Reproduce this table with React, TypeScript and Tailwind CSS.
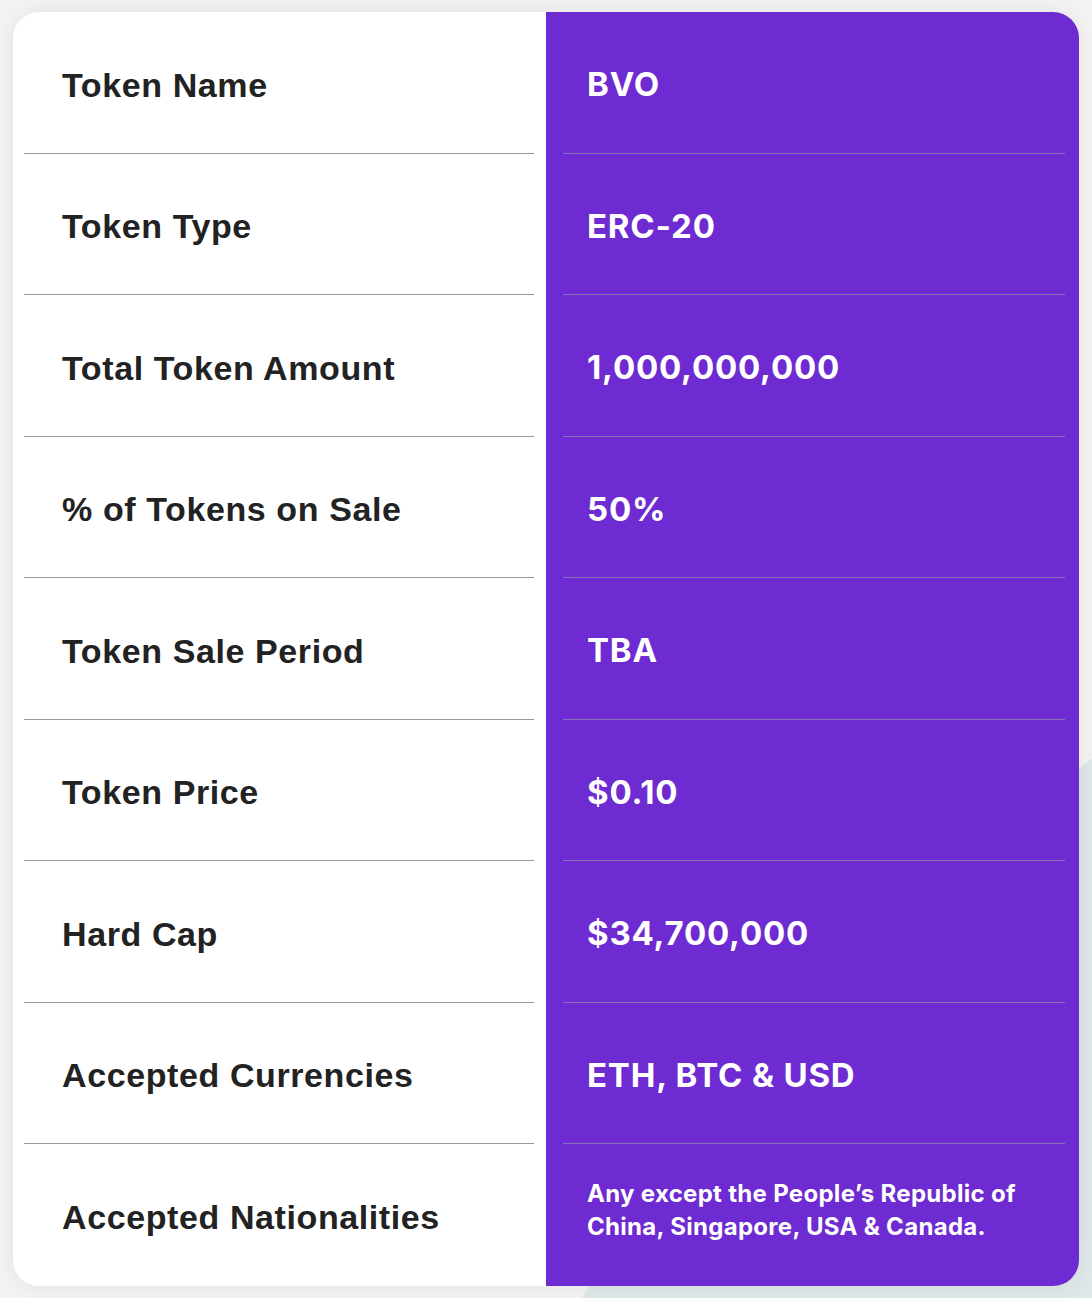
import React from "react";

const rows = [
  { label: "Token Name", value: "BVO" },
  { label: "Token Type", value: "ERC-20" },
  { label: "Total Token Amount", value: "1,000,000,000" },
  { label: "% of Tokens on Sale", value: "50%" },
  { label: "Token Sale Period", value: "TBA" },
  { label: "Token Price", value: "$0.10" },
  { label: "Hard Cap", value: "$34,700,000" },
  { label: "Accepted Currencies", value: "ETH, BTC & USD" },
  {
    label: "Accepted Nationalities",
    value: "Any except the People’s Republic of China, Singapore, USA & Canada.",
    small: true,
  },
];

const App = () => {
  return (
    <div className="relative min-h-[1298px] w-full overflow-hidden bg-[#f3f3f3] px-[13px] py-[12px]">
      <div className="absolute right-0 bottom-0 h-[540px] w-[510px] bg-[#dfe8e8] [clip-path:polygon(100%_0,100%_100%,0_100%,30%_55%)]" />
      <div className="relative grid grid-cols-2 overflow-hidden rounded-[26px] shadow-[0_0_24px_rgba(0,0,0,0.07)]">
        <div className="flex flex-col bg-white pl-[11px] pr-[12px]">
          {rows.map((r, i) => (
            <div
              key={r.label}
              className={`flex h-[141.5px] items-center pl-[38px] pt-[6px] ${
                i < rows.length - 1 ? "border-b border-[#949a9b]" : ""
              }`}
            >
              <span className="font-['Liberation_Sans',Arial,sans-serif] text-[34px] font-bold tracking-[0.6px] text-[#222]">
                {r.label}
              </span>
            </div>
          ))}
        </div>
        <div className="flex flex-col bg-[#6d2bd1] pl-[17px] pr-[14px]">
          {rows.map((r, i) => (
            <div
              key={r.label}
              className={`flex h-[141.5px] items-center pl-[24px] ${
                i < rows.length - 1 ? "border-b border-[#8a70b4]" : ""
              } ${r.small ? "pb-[10px]" : "pt-[5px]"}`}
            >
              {r.small ? (
                <span className="max-w-[460px] font-['Inter',sans-serif] text-[24px] leading-[33px] font-bold tracking-[0.3px] text-white">
                  {r.value}
                </span>
              ) : (
                <span className="font-['Inter',sans-serif] text-[33px] font-bold tracking-[0.8px] text-white">
                  {r.value}
                </span>
              )}
            </div>
          ))}
        </div>
      </div>
    </div>
  );
};

export default App;
